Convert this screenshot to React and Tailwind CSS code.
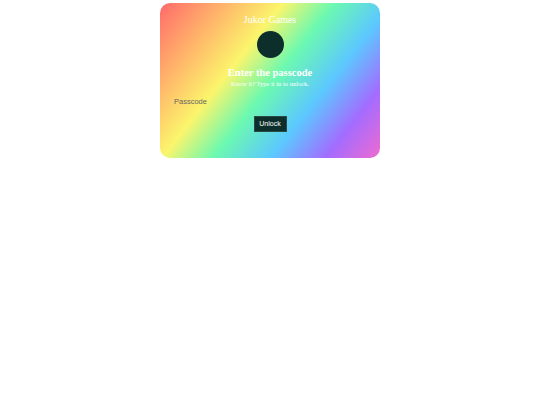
import React, { useState } from 'react';

const App = () => {
    const [code, setCode] = useState('');

    return (
        <div className="min-h-screen bg-white flex justify-center pt-[3px]">
            <div
                className="w-[220px] h-[155px] rounded-[10px] flex flex-col items-center pt-[11px] px-[14px] bg-[linear-gradient(128deg,#ff6a6a_0%,#ffb86a_20%,#fbf56c_36%,#6cf9b0_51%,#5cc8ff_68%,#a36cff_84%,#f06ad0_100%)]"
            >
                <div className="text-white text-[10px] leading-[12px] font-['Liberation_Serif',serif]">Jukor Games</div>
                <div className="mt-[5px] w-[27px] h-[27px] rounded-full bg-[#0c2f2b]" />
                <h1 className="mt-[8px] text-white font-bold text-[10.5px] leading-[13px] font-['Liberation_Serif',serif]">
                    Enter the passcode
                </h1>
                <p className="mt-[1px] text-white text-[6.5px] leading-[8px] font-['Liberation_Serif',serif]">
                    Know it? Type it in to unlock.
                </p>
                <input
                    type="password"
                    value={code}
                    onChange={(e) => setCode(e.target.value)}
                    placeholder="Passcode"
                    className="mt-[9px] w-full bg-transparent outline-none text-[7.5px] leading-[9px] text-[#555] placeholder:text-[#666] font-['Liberation_Sans',sans-serif]"
                />
                <button className="mt-[10px] w-[33px] h-[16px] bg-[#0c2f2b] text-white text-[7px] font-normal font-['Liberation_Sans',sans-serif] border border-[#2a4a46]">
                    Unlock
                </button>
            </div>
        </div>
    );
};

export default App;
